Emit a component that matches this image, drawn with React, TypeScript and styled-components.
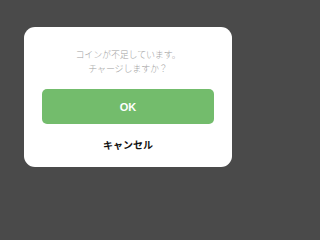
import React from "react";
import styled, { createGlobalStyle } from "styled-components";

const Global = createGlobalStyle`
  html, body { margin: 0; padding: 0; background: #4a4a4a; }
  body { font-family: "Noto Sans CJK JP", "Noto Sans", sans-serif; }
`;

const Backdrop = styled.div`
  width: 257px;
  height: 213px;
  background: #4a4a4a;
  padding: 27px 0 0 24px;
  box-sizing: border-box;
`;

const Card = styled.div`
  width: 208px;
  height: 140px;
  background: #ffffff;
  border-radius: 11px;
  box-sizing: border-box;
  padding: 21px 18px 0;
  display: flex;
  flex-direction: column;
  align-items: stretch;
`;

const Message = styled.p`
  margin: 0;
  text-align: center;
  font-size: 9px;
  line-height: 14px;
  color: #a2a2a2;
  font-weight: 300;
  letter-spacing: -0.15px;
`;

const OkButton = styled.button`
  margin-top: 13px;
  height: 35px;
  border: none;
  border-radius: 5px;
  background: #73bc6c;
  color: #ffffff;
  font-family: "Liberation Sans", Arial, sans-serif;
  font-weight: bold;
  font-size: 11px;
  padding: 0;
`;

const CancelButton = styled.button`
  margin-top: 14px;
  border: none;
  background: transparent;
  color: #111111;
  font-family: "Noto Sans CJK JP", sans-serif;
  font-weight: bold;
  font-size: 10px;
  line-height: 14px;
  padding: 0;
`;

export default function App() {
  return (
    <>
      <Global />
      <Backdrop>
        <Card>
          <Message>
            コインが不足しています。
            <br />
            チャージしますか？
          </Message>
          <OkButton>OK</OkButton>
          <CancelButton>キャンセル</CancelButton>
        </Card>
      </Backdrop>
    </>
  );
}
